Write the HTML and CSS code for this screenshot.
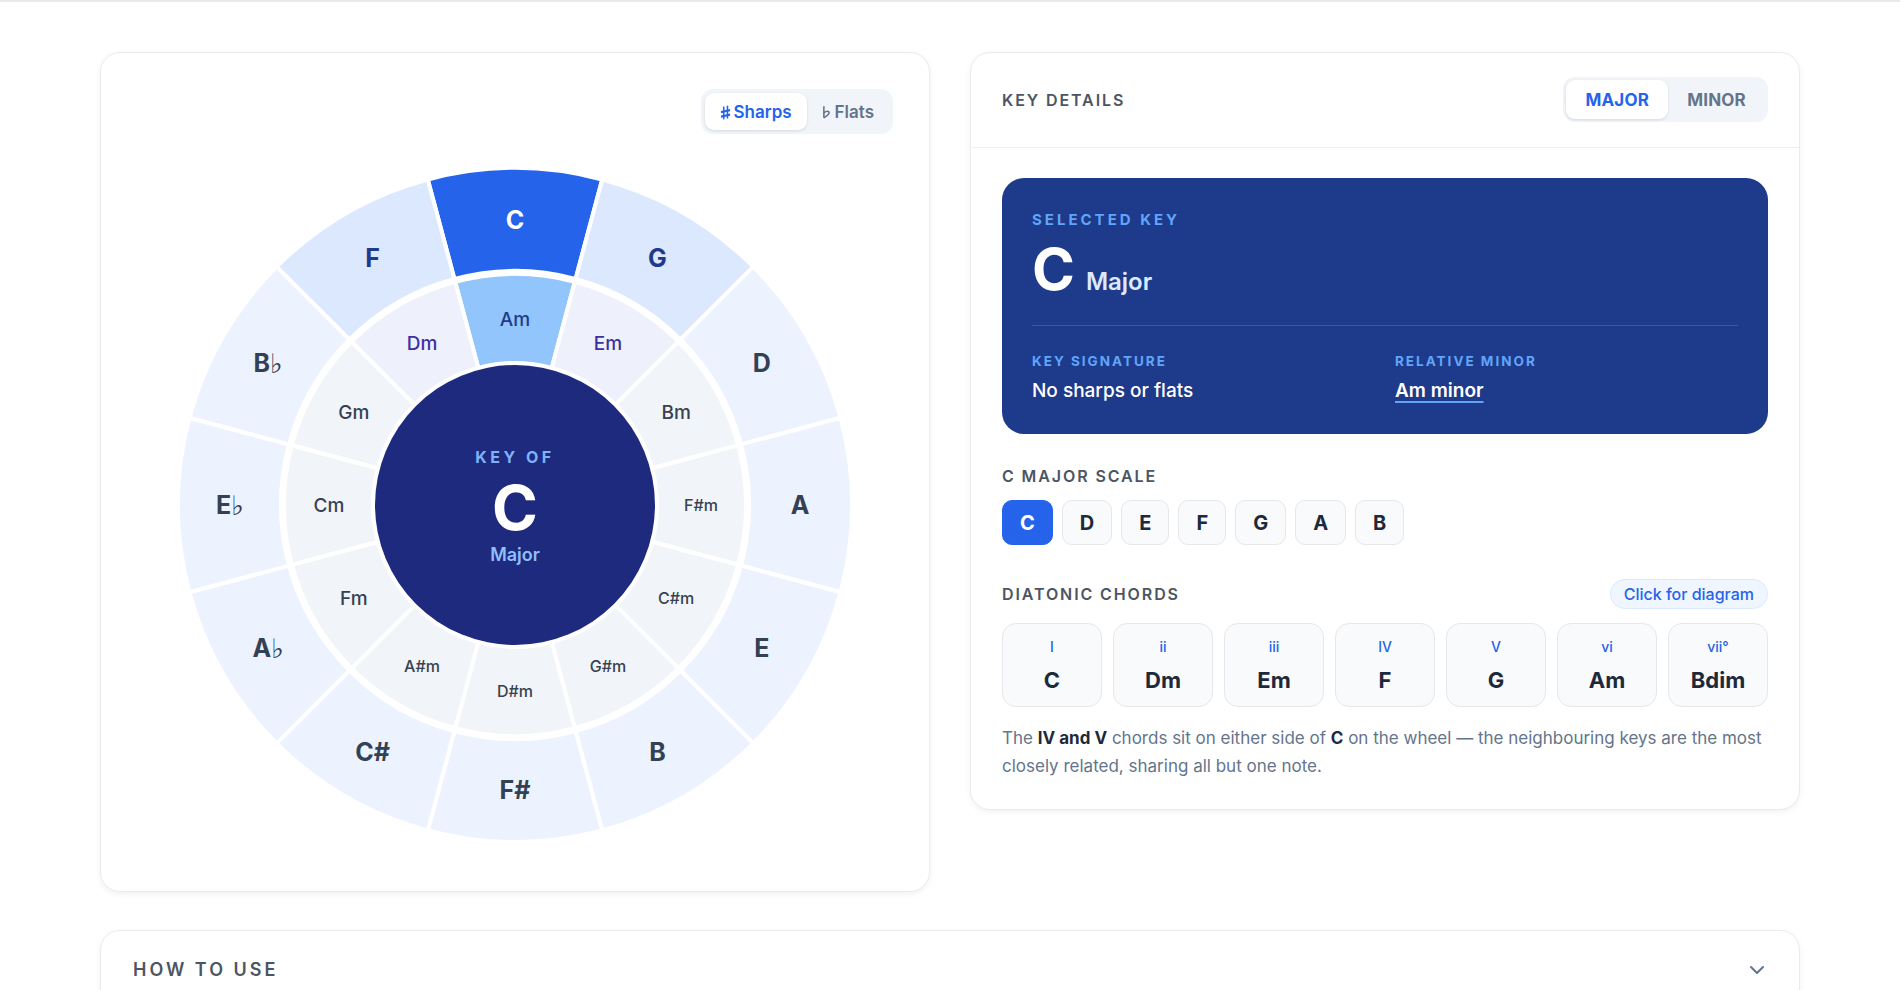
FILE: index.html
```html
<!DOCTYPE html>
<html lang="en">
<head>
<meta charset="utf-8">
<title>Circle of Fifths</title>
<link rel="stylesheet" href="styles.css">
</head>
<body>
<div class="topline"></div>
<main class="page">
  <div class="grid">
    <section class="card wheel-card">
      <div class="wheel-bar">
        <div class="toggle">
          <button class="toggle-btn is-active"><svg class="acc-icon" viewBox="0 0 12 16" width="11" height="15"><rect x="3.2" y="1.5" width="1.7" height="14"/><rect x="7.3" y="0.5" width="1.7" height="14"/><polygon points="1,6.4 11,4.2 11,6.6 1,8.8"/><polygon points="1,11.4 11,9.2 11,11.6 1,13.8"/></svg>Sharps</button>
          <button class="toggle-btn"><svg class="acc-icon flat-icon" viewBox="0 0 10 16" width="9" height="14"><path d="M2 1.5V14.6" fill="none" stroke="currentColor" stroke-width="1.8"/><path d="M2 14.6C5.6 12.6 8 10.6 8 8.7C8 6.8 5 6.6 2 8.9" fill="none" stroke="currentColor" stroke-width="1.8"/></svg>Flats</button>
        </div>
      </div>
      <svg class="wheel" viewBox="-350 -350 700 700" width="700" height="700">
        <defs>
          <path id="maj" d="M-87.22 -325.52A337 337 0 0 1 87.22 -325.52L60.56 -226.03A234 234 0 0 0 -60.56 -226.03Z"/>
          <path id="min" d="M-59.79 -223.13A231 231 0 0 1 59.79 -223.13L36.75 -137.16A142 142 0 0 0 -36.75 -137.16Z"/>
        </defs>
        <g class="ring">
          <use href="#maj" class="w-major w-active"/>
          <use href="#maj" class="w-major w-near" transform="rotate(30)"/>
          <use href="#maj" class="w-major" transform="rotate(60)"/>
          <use href="#maj" class="w-major" transform="rotate(90)"/>
          <use href="#maj" class="w-major" transform="rotate(120)"/>
          <use href="#maj" class="w-major" transform="rotate(150)"/>
          <use href="#maj" class="w-major" transform="rotate(180)"/>
          <use href="#maj" class="w-major" transform="rotate(210)"/>
          <use href="#maj" class="w-major" transform="rotate(240)"/>
          <use href="#maj" class="w-major" transform="rotate(270)"/>
          <use href="#maj" class="w-major" transform="rotate(300)"/>
          <use href="#maj" class="w-major w-near" transform="rotate(330)"/>
        </g>
        <g class="ring">
          <use href="#min" class="w-minor w-minor-active"/>
          <use href="#min" class="w-minor w-minor-near" transform="rotate(30)"/>
          <use href="#min" class="w-minor" transform="rotate(60)"/>
          <use href="#min" class="w-minor" transform="rotate(90)"/>
          <use href="#min" class="w-minor" transform="rotate(120)"/>
          <use href="#min" class="w-minor" transform="rotate(150)"/>
          <use href="#min" class="w-minor" transform="rotate(180)"/>
          <use href="#min" class="w-minor" transform="rotate(210)"/>
          <use href="#min" class="w-minor" transform="rotate(240)"/>
          <use href="#min" class="w-minor" transform="rotate(270)"/>
          <use href="#min" class="w-minor" transform="rotate(300)"/>
          <use href="#min" class="w-minor w-minor-near" transform="rotate(330)"/>
        </g>
        <g class="labels-major">
          <text x="0" y="-285" class="lbl-active">C</text>
          <text x="142.5" y="-246.8" class="lbl-near">G</text>
          <text x="246.8" y="-142.5">D</text>
          <text x="285" y="0">A</text>
          <text x="246.8" y="142.5">E</text>
          <text x="142.5" y="246.8">B</text>
          <text x="0" y="285">F#</text>
          <text x="-142.5" y="246.8">C#</text>
          <text x="-246.8" y="142.5">A<tspan class="flat">♭</tspan></text>
          <text x="-285" y="0">E<tspan class="flat">♭</tspan></text>
          <text x="-246.8" y="-142.5">B<tspan class="flat">♭</tspan></text>
          <text x="-142.5" y="-246.8" class="lbl-near">F</text>
        </g>
        <g class="labels-minor">
          <text x="0" y="-186" class="lbl-active">Am</text>
          <text x="93" y="-161.1" class="lbl-near">Em</text>
          <text x="161.1" y="-93">Bm</text>
          <text x="186" y="0" class="sm">F#m</text>
          <text x="161.1" y="93" class="sm">C#m</text>
          <text x="93" y="161.1" class="sm">G#m</text>
          <text x="0" y="186" class="sm">D#m</text>
          <text x="-93" y="161.1" class="sm">A#m</text>
          <text x="-161.1" y="93">Fm</text>
          <text x="-186" y="0">Cm</text>
          <text x="-161.1" y="-93">Gm</text>
          <text x="-93" y="-161.1" class="lbl-near">Dm</text>
        </g>
        <circle r="140" class="hub"/>
        <text x="0" y="-48" class="hub-eyebrow">KEY OF</text>
        <text x="0" y="2" class="hub-key">C</text>
        <text x="0" y="49" class="hub-mode">Major</text>
      </svg>
    </section>

    <section class="card details">
      <header class="details-head">
        <h2 class="eyebrow">KEY DETAILS</h2>
        <div class="toggle toggle-mode">
          <button class="toggle-btn is-active">MAJOR</button>
          <button class="toggle-btn">MINOR</button>
        </div>
      </header>
      <div class="details-body">
        <div class="hero">
          <div class="hero-label">SELECTED KEY</div>
          <div class="hero-title"><span class="hero-key">C</span><span class="hero-mode">Major</span></div>
          <div class="hero-facts">
            <div class="fact">
              <div class="fact-label">KEY SIGNATURE</div>
              <div class="fact-value">No sharps or flats</div>
            </div>
            <div class="fact">
              <div class="fact-label">RELATIVE MINOR</div>
              <div class="fact-value"><a class="fact-link">Am minor</a></div>
            </div>
          </div>
        </div>

        <div class="block block-scale">
          <h3 class="eyebrow">C MAJOR SCALE</h3>
          <div class="notes">
            <span class="note is-root">C</span>
            <span class="note">D</span>
            <span class="note">E</span>
            <span class="note">F</span>
            <span class="note">G</span>
            <span class="note">A</span>
            <span class="note">B</span>
          </div>
        </div>

        <div class="block block-chords">
          <div class="block-head">
            <h3 class="eyebrow">DIATONIC CHORDS</h3>
            <button class="pill">Click for diagram</button>
          </div>
          <div class="chords">
            <div class="chord"><div class="chord-num">I</div><div class="chord-name">C</div></div>
            <div class="chord"><div class="chord-num">ii</div><div class="chord-name">Dm</div></div>
            <div class="chord"><div class="chord-num">iii</div><div class="chord-name">Em</div></div>
            <div class="chord"><div class="chord-num">IV</div><div class="chord-name">F</div></div>
            <div class="chord"><div class="chord-num">V</div><div class="chord-name">G</div></div>
            <div class="chord"><div class="chord-num">vi</div><div class="chord-name">Am</div></div>
            <div class="chord"><div class="chord-num">vii°</div><div class="chord-name">Bdim</div></div>
          </div>
          <p class="desc">The <strong>IV and V</strong> chords sit on either side of <strong>C</strong> on the wheel — the neighbouring keys are the most closely related, sharing all but one note.</p>
        </div>
      </div>
    </section>
  </div>

  <section class="card howto">
    <h2 class="eyebrow howto-title">HOW TO USE</h2>
    <svg class="chev" viewBox="0 0 20 20" width="20" height="20"><path d="M4 7l6 6 6-6" fill="none" stroke="#64748b" stroke-width="2" stroke-linecap="round" stroke-linejoin="round"/></svg>
  </section>
</main>
</body>
</html>
```

FILE: styles.css
```css
* { box-sizing: border-box; }
html, body { margin: 0; padding: 0; background: #ffffff; }
body {
  font-family: "Inter", "Noto Sans", "DejaVu Sans", sans-serif;
  color: #1e293b;
}
button { font-family: inherit; border: 0; cursor: pointer; }
h2, h3, p { margin: 0; }

.topline { height: 2px; background: #e7e9ed; }

.page {
  width: 1700px;
  margin: 0 auto;
  padding-top: 50px;
}

.grid {
  display: grid;
  grid-template-columns: 830px 830px;
  gap: 40px;
  align-items: start;
}

.card {
  background: #fff;
  border: 1px solid #e8ebf0;
  border-radius: 20px;
  box-shadow: 0 2px 6px rgba(15, 23, 42, 0.06);
}

/* ---------- wheel card ---------- */
.wheel-card {
  padding: 36px;
  display: flex;
  flex-direction: column;
  align-items: center;
}
.wheel-bar { align-self: stretch; display: flex; justify-content: flex-end; }

.toggle {
  display: flex;
  background: #f1f5f9;
  border-radius: 12px;
  padding: 4px;
}
.toggle-btn {
  height: 37px;
  padding: 0 15px;
  border-radius: 9px;
  background: transparent;
  font-size: 17px;
  font-weight: 600;
  color: #64748b;
  display: flex;
  align-items: center;
}
.toggle-btn.is-active {
  background: #fff;
  color: #2563eb;
  box-shadow: 0 1px 3px rgba(15, 23, 42, 0.12);
}
.acc-icon { fill: currentColor; margin-right: 3px; margin-top: 1px; }
.flat-icon { fill: none; margin-right: 4px; }

.wheel { display: block; margin-top: 21px; }
.w-major { fill: #ecf3fe; stroke: #fff; stroke-width: 4; }
.w-major.w-near { fill: #dbe8fd; }
.w-major.w-active { fill: #2563eb; }
.w-minor { fill: #f1f4f8; stroke: #fff; stroke-width: 4; }
.w-minor.w-minor-near { fill: #eef1fc; }
.w-minor.w-minor-active { fill: #93c5fd; }

.wheel text {
  font-family: "Inter", "DejaVu Sans", sans-serif;
  text-anchor: middle;
  dominant-baseline: central;
}
.labels-major text { font-size: 25px; font-weight: 700; fill: #334155; }
.labels-major text.lbl-near { fill: #1e3a8a; }
.labels-major text.lbl-active { fill: #ffffff; }
.wheel text tspan.flat { font-family: "DejaVu Sans", sans-serif; font-weight: 700; font-size: 27px; }
.labels-minor text { font-size: 19px; font-weight: 500; fill: #374151; }
.labels-minor text.sm { font-size: 16px; }
.labels-minor text.lbl-near { fill: #3b2fa3; }
.labels-minor text.lbl-active { fill: #1e3a8a; }

.hub { fill: #1e2a7d; }
.wheel text.hub-eyebrow { font-size: 16px; font-weight: 700; letter-spacing: 3.5px; fill: #7fb2fb; }
.wheel text.hub-key { font-size: 62px; font-weight: 700; fill: #ffffff; }
.wheel text.hub-mode { font-size: 18px; font-weight: 600; fill: #8fbffc; }

/* ---------- details card ---------- */
.details-head {
  display: flex;
  justify-content: space-between;
  align-items: center;
  padding: 24px 31px 25px 31px;
  border-bottom: 1px solid #eef0f4;
}
.eyebrow {
  font-size: 16px;
  font-weight: 600;
  letter-spacing: 1.9px;
  color: #4b5563;
}
.toggle-mode { padding: 3px; }
.toggle-mode .toggle-btn {
  height: 39px;
  padding: 0 19px;
  font-size: 17px;
  font-weight: 700;
  letter-spacing: 0.2px;
}

.details-body { padding: 30px 31px 29px 31px; }

.hero {
  background: #1e3a8a;
  border-radius: 22px;
  padding: 32px 30px 30px 30px;
  color: #fff;
}
.hero-label {
  font-size: 15px;
  font-weight: 700;
  letter-spacing: 3px;
  color: #60a5fa;
  line-height: 20px;
}
.hero-title {
  display: flex;
  align-items: baseline;
  gap: 11px;
  margin-top: 10px;
  padding-bottom: 14px;
  border-bottom: 1px solid rgba(147, 197, 253, 0.22);
  line-height: 58px;
}
.hero-key { font-size: 58px; font-weight: 700; }
.hero-mode { font-size: 24px; font-weight: 600; color: #dbeafe; }
.hero-facts {
  display: grid;
  grid-template-columns: 1fr 1fr;
  gap: 20px;
  margin-top: 26px;
}
.fact-label {
  font-size: 13.5px;
  font-weight: 700;
  letter-spacing: 2px;
  color: #60a5fa;
  line-height: 18px;
}
.fact-value {
  margin-top: 8px;
  font-size: 19px;
  font-weight: 500;
  line-height: 26px;
  color: #fff;
}
.fact-link {
  font-weight: 600;
  text-decoration: underline;
  text-decoration-color: #60a5fa;
  text-underline-offset: 4px;
  text-decoration-thickness: 1.5px;
}

.block-scale { margin-top: 32px; }
.block-scale .eyebrow { line-height: 20px; }
.notes { display: flex; gap: 9px; margin-top: 14px; }
.note {
  height: 45px;
  padding: 0 17px;
  display: flex;
  align-items: center;
  justify-content: center;
  border-radius: 10px;
  background: #f8fafc;
  border: 1px solid #e5e7eb;
  font-size: 20px;
  font-weight: 700;
  color: #1e293b;
}
.note.is-root { background: #2563eb; border-color: #2563eb; color: #fff; }

.block-chords { margin-top: 34px; }
.block-head { display: flex; justify-content: space-between; align-items: center; }
.pill {
  height: 30px;
  padding: 0 13px;
  border-radius: 15px;
  background: #eff6ff;
  border: 1px solid #dbeafe;
  color: #2563eb;
  font-size: 16px;
  font-weight: 500;
}
.chords {
  display: grid;
  grid-template-columns: repeat(7, 1fr);
  gap: 11px;
  margin-top: 14px;
}
.chord {
  display: flex;
  flex-direction: column;
  align-items: center;
  padding: 14px 0 12px 0;
  background: #f8fafc;
  border: 1px solid #e5e7eb;
  border-radius: 14px;
}
.chord-num { font-size: 14px; font-weight: 500; color: #2563eb; line-height: 18px; }
.chord-name { margin-top: 10px; font-size: 22px; font-weight: 700; color: #1e293b; line-height: 28px; }

.desc {
  margin-top: 17px;
  font-size: 17px;
  line-height: 28px;
  color: #64748b;
}
.desc strong { color: #1e293b; font-weight: 700; }

/* ---------- how to use ---------- */
.howto {
  margin-top: 38px;
  padding: 27px 32px 40px 32px;
  display: flex;
  justify-content: space-between;
  align-items: flex-start;
}
.howto-title { font-size: 18px; letter-spacing: 3px; line-height: 24px; }
.chev { margin-top: 2px; }
```
